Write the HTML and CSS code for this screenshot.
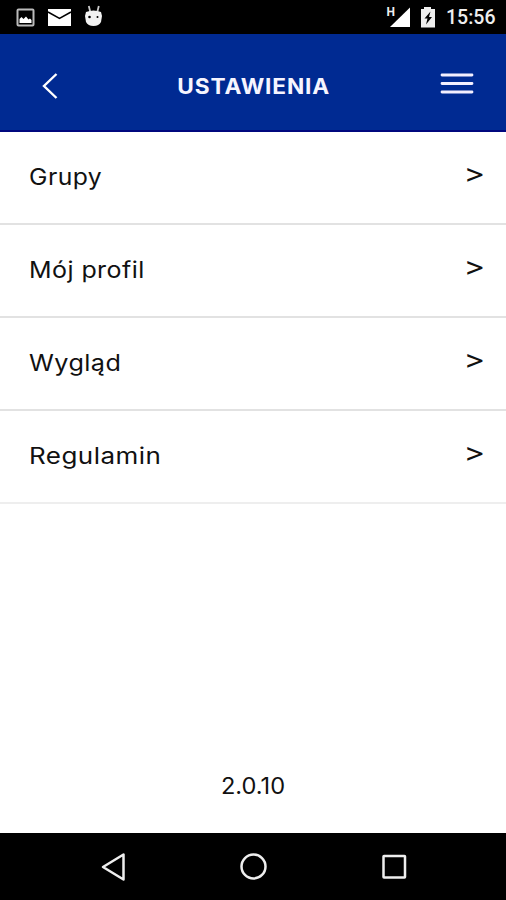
FILE: index.html
```html
<!DOCTYPE html>
<html lang="pl">
<head>
<meta charset="utf-8">
<title>Ustawienia</title>
<link rel="stylesheet" href="styles.css">
</head>
<body>
<div class="status">
  <svg class="notifications" width="120" height="34" viewBox="0 0 120 34">
    <rect x="17.5" y="9.5" width="16" height="16" rx="1" fill="none" stroke="#bbb" stroke-width="2"/>
    <path d="M19.500 23v-4l2-2 2 2 2.500-2.500 2.500 3 1.500-1 1.500 1.500v3z" fill="#fff"/>
    <path d="M48 9h23v17H48z" fill="#fff"/>
    <path d="M48 12l11.500 6.500L71 12" fill="none" stroke="#000" stroke-width="1.500"/>
    <path d="M88.800 6l1.500 6M98.800 6l-1.500 6" stroke="#ccc" stroke-width="1.800"/>
    <path d="M86 12q7.500-3 15 0l1 4-1 6q-2 4-7.500 4T86 22l-1-6z" fill="#f2f2f2"/>
    <circle cx="89.500" cy="17" r="1.300"/><circle cx="97.500" cy="17" r="1"/>
  </svg>
  <div class="system">
    <span class="network">H</span>
    <svg width="50" height="34" viewBox="0 0 50 34">
      <path d="M21 7.500V27H1z" fill="#fff"/>
      <path d="M35 7h7v2h4v18.500H32V9h3z" fill="#eee"/>
      <path d="M41.500 11.500L35.500 18.500h3l-1.500 6 6-7.500h-3z" fill="#000"/>
    </svg>
    <time class="clock">15:56</time>
  </div>
</div>
<header class="header">
  <svg class="back" width="20" height="30" viewBox="0 0 20 30"><path d="M17.500 3L5 15 17.500 27" fill="none" stroke="#fff" stroke-width="2.400"/></svg>
  <h1 class="title">USTAWIENIA</h1>
  <svg class="menu" width="34" height="24" viewBox="0 0 34 24"><path d="M2 3h30M2 11.500h30M2 20h30" stroke="#f3efff" stroke-width="2.800" stroke-linecap="round"/></svg>
</header>
<main class="main">
  <ul class="list">
    <li class="row"><span class="label grupy">Grupy</span><span class="arrow">&gt;</span></li>
    <li class="row"><span class="label profil">Mój profil</span><span class="arrow">&gt;</span></li>
    <li class="row"><span class="label wyglad">Wygląd</span><span class="arrow">&gt;</span></li>
    <li class="row"><span class="label regulamin">Regulamin</span><span class="arrow">&gt;</span></li>
  </ul>
  <p class="version">2.0.10</p>
</main>
<nav class="nav">
  <svg width="506" height="67" viewBox="0 0 506 67" fill="none" stroke="#eee" stroke-width="2.500">
    <path d="M123.500 21.500v25L103 34z" stroke-linejoin="round"/>
    <circle cx="253.500" cy="33.500" r="12"/>
    <rect x="383.500" y="23" width="21.500" height="21.500" rx=".5"/>
  </svg>
</nav>
</body>
</html>
```
FILE: styles.css
```css
* { box-sizing: border-box; }
body {
  margin: 0;
  height: 900px;
  display: flex;
  flex-direction: column;
  background: #fff;
  color: #111;
  font-family: Inter, "Liberation Sans", sans-serif;
}
.status {
  height: 34px;
  display: flex;
  justify-content: space-between;
  background: #000;
}
.system { display: flex; padding-right: 11px; color: #eee; font-family: Roboto, sans-serif; }
.network { font-size: 12px; font-weight: 700; line-height: 12px; padding-top: 6px; margin-right: -6px; }
.clock { width: 49px; margin-left: 7px; font-size: 19.5px; line-height: 36px; font-weight: 500; white-space: nowrap; }
.header {
  height: 98px;
  display: flex;
  align-items: center;
  justify-content: space-between;
  padding: 8px 32px 0 39px;
  background: #002a92;
  border-bottom: 2px solid #00087e;
}
.title {
  margin: 0;
  font-size: 21px;
  line-height: 30px;
  font-weight: 700;
  letter-spacing: .8px;
  color: #f6f5ff;
  transform: translate(4px, 1px) scaleX(1.08);
}
.menu { margin-bottom: 5px; }
.main { flex: 1; display: flex; flex-direction: column; justify-content: space-between; }
.list { margin: 0; padding: 0; list-style: none; }
.row {
  height: 93px;
  display: flex;
  align-items: center;
  justify-content: space-between;
  padding: 0 22px 1px 28.5px;
  border-bottom: 2px solid #e2e2e2;
}
.row:last-child { border-color: #eee; }
.label { font-size: 22.5px; line-height: 32px; letter-spacing: .4px; transform-origin: left; }
.grupy { transform: scaleX(1.1); }
.profil { transform: scaleX(1.11); }
.wyglad { transform: scaleX(1.12); }
.regulamin { transform: scaleX(1.155); }
.arrow { margin-bottom: 6px; font-size: 26px; font-weight: 400; line-height: 32px; transform-origin: right; transform: translateX(1px) scaleX(1.26); }
.version { margin: 0; padding-bottom: 31px; text-align: center; font-size: 22.5px; line-height: 32px; transform: scaleX(1.05); }
.nav { height: 67px; background: #000; }
.nav svg { display: block; }
```
